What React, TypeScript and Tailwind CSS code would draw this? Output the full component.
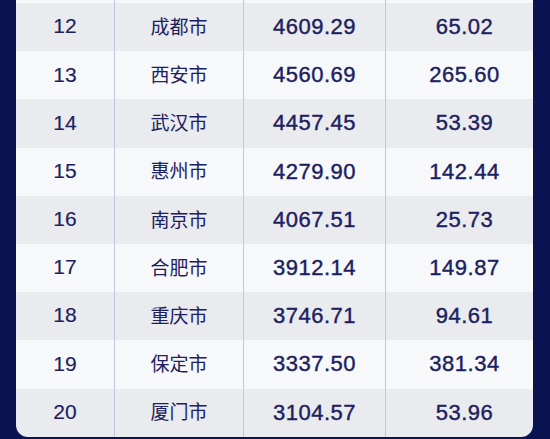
import React from "react";

const rows = [
  ["12", "成都市", "4609.29", "65.02"],
  ["13", "西安市", "4560.69", "265.60"],
  ["14", "武汉市", "4457.45", "53.39"],
  ["15", "惠州市", "4279.90", "142.44"],
  ["16", "南京市", "4067.51", "25.73"],
  ["17", "合肥市", "3912.14", "149.87"],
  ["18", "重庆市", "3746.71", "94.61"],
  ["19", "保定市", "3337.50", "381.34"],
  ["20", "厦门市", "3104.57", "53.96"],
];

export default function App() {
  return (
    <div className="w-[550px] h-[439px] overflow-hidden bg-[#0a1450] pl-[16px] pr-[17px]">
      <div className="rounded-b-[12px] overflow-hidden text-[#1d205e]">
        <div className="grid grid-cols-[98px_129px_142px_148px] h-[3px] bg-[#f6f8fa]">
          <div />
          <div className="border-l border-[#c4c4e0]" />
          <div className="border-l border-[#c4c4e0]" />
          <div className="border-l border-[#c4c4e0]" />
        </div>
        {rows.map((r, i) => (
          <div
            key={r[0]}
            className={`grid grid-cols-[98px_129px_142px_148px] h-[48.2px] ${
              i % 2 === 0 ? "bg-[#e9ebee]" : "bg-[#f6f8fa]"
            }`}
          >
            <div className="flex items-center justify-center pb-[2px] text-[21px] [-webkit-text-stroke:0.15px_#1d205e] font-['Liberation_Sans',sans-serif]">
              {r[0]}
            </div>
            <div className="flex items-center justify-center pb-[2px] border-l border-[#c4c4e0] text-[19px] font-['Noto_Sans_CJK_SC','Noto_Sans',sans-serif]">
              {r[1]}
            </div>
            <div className="flex items-center justify-center pb-[1px] border-l border-[#c4c4e0] text-[22px] tracking-[0.5px] [-webkit-text-stroke:0.4px_#1d205e] font-['Liberation_Sans',sans-serif]">
              {r[2]}
            </div>
            <div className="flex items-center justify-center pb-[1px] border-l border-[#c4c4e0] pl-[10px] text-[22px] tracking-[0.5px] [-webkit-text-stroke:0.4px_#1d205e] font-['Liberation_Sans',sans-serif]">
              {r[3]}
            </div>
          </div>
        ))}
      </div>
    </div>
  );
}
